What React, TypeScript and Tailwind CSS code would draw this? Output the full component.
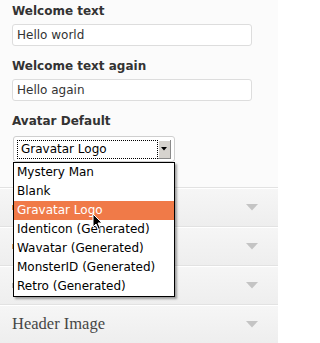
const font = { fontFamily: '"DejaVu Sans", sans-serif' };

const options = [
  'Mystery Man',
  'Blank',
  'Gravatar Logo',
  'Identicon (Generated)',
  'Wavatar (Generated)',
  'MonsterID (Generated)',
  'Retro (Generated)',
];

// titles of the first three sections sit under the open list; only a sliver of their first letter shows
const sections = [
  { title: '', sliver: 'bg-[#e0904a]' },
  { title: '', sliver: 'bg-[#d9a060]' },
  { title: '', sliver: 'bg-[#b8b8b8]' },
  { title: 'Header Image', sliver: '' },
];

const Field = ({ label, value }: { label: string; value: string }) => (
  <div className="flex flex-col">
    <div className="h-[18px] leading-[18px] text-[12px] font-bold text-[#333]">{label}</div>
    <div className="mt-1 h-[22px] w-[240px] rounded-[3px] border border-[#dddddd] bg-white pl-1 text-[12px] leading-[20px] text-[#333]">
      {value}
    </div>
  </div>
);

const Caret = () => (
  <svg width="12" height="7" viewBox="0 0 12 7" className="ml-auto">
    <path d="M0 0 L12 0 L6 6.5 Z" fill="#c4c4c4" />
  </svg>
);

export default function App() {
  return (
    <div className="relative h-[343px] w-[278px] overflow-hidden bg-[#fbfbfb]" style={font}>
      <div className="flex flex-col gap-[11px] px-3 pt-[2px] h-[187px]">
        <Field label="Welcome text" value="Hello world" />
        <Field label="Welcome text again" value="Hello again" />
        <div className="flex flex-col">
          <div className="h-[18px] leading-[18px] text-[12px] font-bold text-[#333]">Avatar Default</div>
          <div className="relative mt-[6px] ml-px flex h-[26px] w-[162px] items-center rounded-[3px] border border-[#cfcfcf] bg-white px-[3px]">
            <div className="h-[19px] flex-1 border border-dotted border-black pl-[3px] text-[12px] leading-[17px] text-black">
              Gravatar Logo
            </div>
            <div className="flex h-[19px] w-[13px] items-center justify-center border-r border-b border-[#8a8a8a] bg-[#d6d3ce] shadow-[inset_1px_1px_0_#fff]">
              <svg width="6" height="4" viewBox="0 0 6 4">
                <path d="M0 0 L6 0 L3 3.5 Z" fill="#000" />
              </svg>
            </div>
          </div>
        </div>
      </div>
      <div className="flex flex-col">
        {sections.map((s, i) => (
          <div
            key={i}
            className="flex h-[39px] items-center border-t border-t-[#e2e2e2] bg-gradient-to-b from-[#f6f6f6] to-[#eeeeee] pl-3 pr-5 shadow-[inset_0_1px_0_#fff]"
          >
            {s.title ? (
              <span className="text-[16.5px] text-[#464646]" style={{ fontFamily: '"Liberation Serif", serif' }}>
                {s.title}
              </span>
            ) : (
              <span className={`h-[5px] w-[2px] ${s.sliver}`} />
            )}
            <Caret />
          </div>
        ))}
      </div>
      <div className="absolute left-[13px] top-[162px] w-[162px] border border-black bg-white shadow-[2px_2px_2px_rgba(0,0,0,0.35)]">
        {options.map((o) => (
          <div
            key={o}
            className={
              o === 'Gravatar Logo'
                ? 'h-[19px] bg-[#f07a48] pl-[3px] text-[12px] leading-[19px] text-white'
                : 'h-[19px] pl-[3px] text-[12px] leading-[19px] text-black'
            }
          >
            {o}
          </div>
        ))}
      </div>
      <svg width="12" height="18" viewBox="0 0 12 18" className="absolute left-[92px] top-[213px]">
        <path d="M1 1 L1 14 L4 11 L6.5 16.5 L8.5 15.5 L6 10 L10 10 Z" fill="#000" stroke="#fff" strokeWidth="1" />
      </svg>
    </div>
  );
}
